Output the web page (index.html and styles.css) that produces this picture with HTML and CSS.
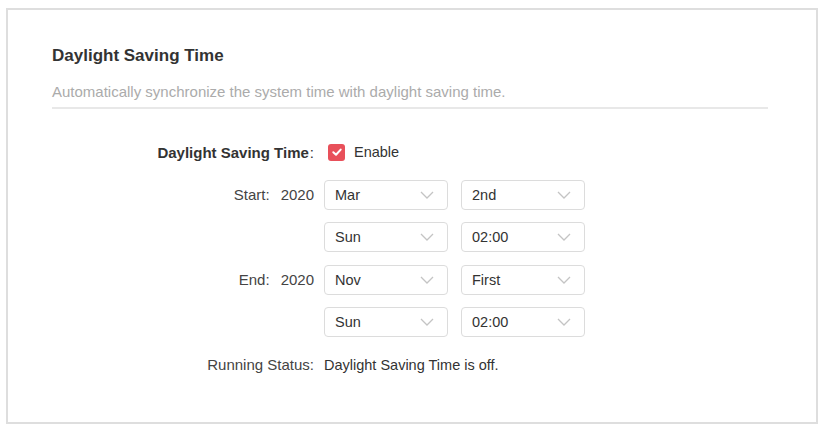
FILE: index.html
```html
<!DOCTYPE html>
<html>
<head>
<meta charset="utf-8">
<link rel="stylesheet" href="styles.css">
</head>
<body>
<div class="panel">
  <h2 class="title">Daylight Saving Time</h2>
  <p class="desc">Automatically synchronize the system time with daylight saving time.</p>
  <div class="divider"></div>
  <div class="form">
    <div class="label strong">Daylight Saving Time<span class="colon">:</span></div>
    <div class="field">
      <span class="checkbox"><svg viewBox="0 0 16 16" width="16" height="16"><path d="M4.3 8.2 L7 10.7 L11.7 5.6" fill="none" stroke="#fff" stroke-width="2" stroke-linecap="round" stroke-linejoin="round"/></svg></span>
      <span class="check-text">Enable</span>
    </div>

    <div class="label">Start:<span class="year">2020</span></div>
    <div class="field selects">
      <div class="select"><span>Mar</span><svg class="chev" viewBox="0 0 14 8" width="14" height="8"><path d="M1 1 L7 7 L13 1" fill="none" stroke="#c4c4c4" stroke-width="1.3"/></svg></div>
      <div class="select"><span>2nd</span><svg class="chev" viewBox="0 0 14 8" width="14" height="8"><path d="M1 1 L7 7 L13 1" fill="none" stroke="#c4c4c4" stroke-width="1.3"/></svg></div>
    </div>

    <div class="label"></div>
    <div class="field selects">
      <div class="select"><span>Sun</span><svg class="chev" viewBox="0 0 14 8" width="14" height="8"><path d="M1 1 L7 7 L13 1" fill="none" stroke="#c4c4c4" stroke-width="1.3"/></svg></div>
      <div class="select"><span>02:00</span><svg class="chev" viewBox="0 0 14 8" width="14" height="8"><path d="M1 1 L7 7 L13 1" fill="none" stroke="#c4c4c4" stroke-width="1.3"/></svg></div>
    </div>

    <div class="label">End:<span class="year">2020</span></div>
    <div class="field selects">
      <div class="select"><span>Nov</span><svg class="chev" viewBox="0 0 14 8" width="14" height="8"><path d="M1 1 L7 7 L13 1" fill="none" stroke="#c4c4c4" stroke-width="1.3"/></svg></div>
      <div class="select"><span>First</span><svg class="chev" viewBox="0 0 14 8" width="14" height="8"><path d="M1 1 L7 7 L13 1" fill="none" stroke="#c4c4c4" stroke-width="1.3"/></svg></div>
    </div>

    <div class="label"></div>
    <div class="field selects">
      <div class="select"><span>Sun</span><svg class="chev" viewBox="0 0 14 8" width="14" height="8"><path d="M1 1 L7 7 L13 1" fill="none" stroke="#c4c4c4" stroke-width="1.3"/></svg></div>
      <div class="select"><span>02:00</span><svg class="chev" viewBox="0 0 14 8" width="14" height="8"><path d="M1 1 L7 7 L13 1" fill="none" stroke="#c4c4c4" stroke-width="1.3"/></svg></div>
    </div>

    <div class="label">Running Status:</div>
    <div class="field">Daylight Saving Time is off.</div>
  </div>
</div>
</body>
</html>
```
FILE: styles.css
```css
* { box-sizing: border-box; }
html, body {
  margin: 0;
  padding: 0;
  background: #fff;
}
body {
  font-family: "Liberation Sans", Arial, sans-serif;
  color: #333;
  font-size: 14.5px;
}
.panel {
  margin: 8px 0 0 6px;
  width: 812px;
  height: 416px;
  border: 2px solid #dedede;
  padding: 36px 48px 0 44px;
}
.title {
  margin: 0;
  font-size: 17px;
  line-height: 20px;
  font-weight: bold;
  color: #333;
}
.desc {
  margin: 17px 0 0;
  font-size: 15px;
  line-height: 18px;
  color: #ababab;
}
.divider {
  margin-top: 6px;
  height: 2px;
  background: #e8e8e8;
}
.form {
  margin-top: 28px;
  display: grid;
  grid-template-columns: 262px auto;
  column-gap: 10px;
  row-gap: 12.6px;
}
.label {
  height: 30px;
  display: flex;
  align-items: center;
  justify-content: flex-end;
  color: #444;
  font-size: 15px;
}
.label.strong {
  font-weight: bold;
  color: #333;
}
.colon {
  font-weight: normal;
  margin-left: 1px;
}
.year {
  margin-left: 11px;
}
.field {
  height: 30px;
  display: flex;
  align-items: center;
  color: #333;
}
.checkbox {
  width: 17px;
  height: 17px;
  margin-left: 4px;
  border-radius: 3px;
  background: #e8505a;
  display: flex;
  align-items: center;
  justify-content: center;
}
.check-text {
  margin-left: 9px;
}
.selects {
  gap: 13px;
}
.select {
  width: 124px;
  height: 30px;
  border: 1px solid #dcdcdc;
  border-radius: 4px;
  display: flex;
  align-items: center;
  justify-content: space-between;
  padding: 0 13px 0 10px;
  background: #fff;
}
.chev {
  display: block;
}
```
